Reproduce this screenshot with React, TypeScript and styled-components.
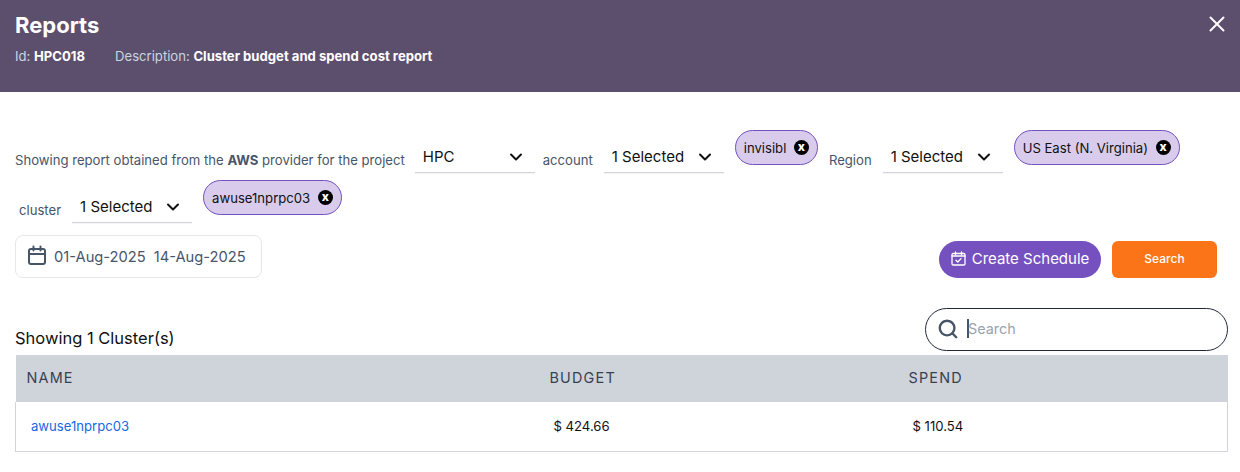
import React from 'react';
import styled, {createGlobalStyle} from 'styled-components';
import {ChevronDown, Search as SearchIcon, X} from 'lucide-react';

const GlobalStyle = createGlobalStyle`
  html, body {
    margin: 0;
    padding: 0;
    background: #fff;
    font-family: Inter, "Liberation Sans", sans-serif;
  }
  * { box-sizing: border-box; }
`

const Page = styled.div`
  width: 1240px;
  height: 472px;
  overflow: hidden;
`

const Header = styled.header`
  height: 92px;
  background-color: #5c4f6e;
  padding: 11px 10px 0 15px;
  display: flex;
  justify-content: space-between;
`

const Title = styled.h1`
  margin: 0;
  color: #fff;
  font-size: 22px;
  line-height: 28px;
  font-weight: 700;
`

const Meta = styled.div`
  display: flex;
  gap: 30px;
  margin-top: 8px;
  font-size: 13.12px;
  line-height: 18px;
  color: #cbd5e1;
  b { color: #fff; font-weight: 700; }
`

const Close = styled.button`
  border: 0;
  padding: 0;
  background: none;
  color: #fff;
  height: 26px;
`

const Body = styled.main`
  padding: 38px 12px 0 15px;
`

const FilterRow = styled.div`
  display: flex;
  align-items: flex-start;
  height: 50px;
`

const Label = styled.span<{$left?: number; $right?: number}>`
  font-size: 13.12px;
  line-height: 18px;
  color: #475569;
  margin-top: 21px;
  margin-left: ${props => props.$left ?? 0}px;
  margin-right: ${props => props.$right ?? 0}px;
  white-space: nowrap;
  b { font-weight: 700; }
`

const Select = styled.div`
  width: 120px;
  height: 43px;
  padding: 18px 9px 0 8px;
  border-bottom: 1px solid #d1d5db;
  display: flex;
  align-items: flex-start;
  justify-content: space-between;
  font-size: 15px;
  line-height: 18px;
  color: #111;
  box-shadow: 0 1px 1px rgba(0, 0, 0, 0.04);
  svg { margin-top: -1px; }
`

const Pill = styled.div<{$left: number}>`
  height: 35px;
  margin-left: ${props => props.$left}px;
  padding: 0 8px;
  display: flex;
  align-items: center;
  gap: 7.6px;
  border: 1px solid #7551c0;
  border-radius: 18px;
  background-color: #d8cbec;
  font-size: 13.12px;
  color: #111;
  white-space: nowrap;
`

const PillClose = styled.span`
  width: 15px;
  height: 15px;
  border-radius: 50%;
  background: #000;
  color: #fff;
  font-size: 12px;
  font-weight: 800;
  line-height: 13px;
  text-align: center;
`

const ActionRow = styled.div`
  display: flex;
  justify-content: space-between;
  align-items: flex-end;
  margin-top: 5px;
  padding-right: 11px;
`

const DateBox = styled.div`
  width: 247px;
  height: 43px;
  border: 1px solid #e5e7eb;
  border-radius: 8px;
  padding: 0 11px;
  display: flex;
  align-items: center;
  gap: 7px;
  font-size: 14.7px;
  color: #475569;
  white-space: nowrap;
  span + span { margin-left: 1px; }
`

const Actions = styled.div`
  display: flex;
  gap: 11px;
`

const ScheduleButton = styled.button`
  width: 162px;
  height: 37px;
  border: 0;
  border-radius: 19px;
  background-color: #7551c0;
  color: #fff;
  font-family: inherit;
  font-size: 15px;
  display: flex;
  align-items: center;
  justify-content: center;
  gap: 6px;
  padding: 0 0 2px;
`

const SearchButton = styled.button`
  width: 105px;
  height: 37px;
  border: 0;
  border-radius: 6px;
  background-color: #fb7418;
  color: #fff;
  font-family: inherit;
  font-size: 12px;
  font-weight: 500;
  padding: 0 0 2px;
`

const TableBar = styled.div`
  display: flex;
  justify-content: space-between;
  align-items: flex-end;
  margin-top: 30px;
  height: 47px;
`

const Count = styled.div`
  font-size: 16.5px;
  line-height: 20px;
  color: #111;
  margin-bottom: 7px;
`

const SearchBox = styled.label`
  width: 303px;
  height: 43px;
  margin-bottom: 4px;
  border: 1px solid #1f2937;
  border-radius: 22px;
  display: flex;
  align-items: center;
  padding: 0 0 2px 11px;
  color: #475569;
`

const Caret = styled.span`
  width: 2px;
  height: 19px;
  margin-left: 8px;
  background: #475569;
  flex: none;
`

const SearchInput = styled.input`
  border: 0;
  outline: none;
  padding: 0;
  margin-left: -1px;
  flex: 1;
  min-width: 0;
  font-family: inherit;
  font-size: 14.4px;
  background: transparent;
  &::placeholder { color: #9ca3af; opacity: 1; }
`

const Table = styled.table`
  width: 1213px;
  border-collapse: collapse;
  table-layout: fixed;
`

const HeadCell = styled.th<{$width?: number}>`
  width: ${props => props.$width ? `${props.$width}px` : 'auto'};
  height: 47px;
  padding: 0 11px 2px;
  background-color: #cfd3da;
  text-align: left;
  font-size: 14.4px;
  font-weight: 400;
  letter-spacing: 1.2px;
  color: #374151;
`

const BodyRow = styled.tr`
  border: 1px solid #d1d5db;
  border-top: 0;
`

const Cell = styled.td`
  height: 49px;
  padding: 0 15px;
  font-size: 13.12px;
  color: #111;
`

const Link = styled.a`
  color: #1668e3;
  text-decoration: none;
`

const DateIcon: React.FC = () => (
  <svg width="20" height="20" viewBox="0 0 20 20" fill="none" stroke="currentColor" strokeWidth="2" strokeLinecap="round" style={{marginTop: -3}}>
    <rect x="2" y="4" width="16" height="15" rx="2" />
    <path d="M2 9h16M6.5 1.5v4M13.5 1.5v4" />
  </svg>
)

const ScheduleIcon: React.FC = () => (
  <svg width="15" height="15" viewBox="0 0 15 15" fill="none" stroke="currentColor" strokeWidth="1.3" strokeLinecap="round" strokeLinejoin="round">
    <rect x="1" y="2.5" width="13" height="11.5" rx="1.2" />
    <path d="M1 5h13M4.5 1v2.5M10.5 1v2.5M5 9.2l1.8 1.8 3.2-3.4" />
  </svg>
)

const App: React.FC = () => {
  const chevron = <ChevronDown size={20} strokeWidth={2.4} />
  return (
    <Page>
      <GlobalStyle />
      <Header>
        <div>
          <Title>Reports</Title>
          <Meta>
            <span>Id: <b>HPC018</b></span>
            <span>Description: <b>Cluster budget and spend cost report</b></span>
          </Meta>
        </div>
        <Close aria-label="Close"><X size={26} strokeWidth={1.8} /></Close>
      </Header>
      <Body>
        <FilterRow>
          <Label $right={10}>Showing report obtained from the <b>AWS</b> provider for the project</Label>
          <Select>HPC{chevron}</Select>
          <Label $left={8} $right={11}>account</Label>
          <Select>1 Selected{chevron}</Select>
          <Pill $left={11}>invisibl<PillClose>x</PillClose></Pill>
          <Label $left={11} $right={11}>Region</Label>
          <Select>1 Selected{chevron}</Select>
          <Pill $left={11}>US East (N. Virginia)<PillClose>x</PillClose></Pill>
        </FilterRow>
        <FilterRow>
          <Label $left={4} $right={11}>cluster</Label>
          <Select>1 Selected{chevron}</Select>
          <Pill $left={11}>awuse1nprpc03<PillClose>x</PillClose></Pill>
        </FilterRow>
        <ActionRow>
          <DateBox>
            <DateIcon />
            <span>01-Aug-2025</span>
            <span>14-Aug-2025</span>
          </DateBox>
          <Actions>
            <ScheduleButton><ScheduleIcon />Create Schedule</ScheduleButton>
            <SearchButton>Search</SearchButton>
          </Actions>
        </ActionRow>
        <TableBar>
          <Count>Showing 1 Cluster(s)</Count>
          <SearchBox>
            <SearchIcon size={22} strokeWidth={2.6} />
            <Caret />
            <SearchInput placeholder="Search" />
          </SearchBox>
        </TableBar>
        <Table>
          <thead>
            <tr>
              <HeadCell $width={523}>NAME</HeadCell>
              <HeadCell $width={359}>BUDGET</HeadCell>
              <HeadCell>SPEND</HeadCell>
            </tr>
          </thead>
          <tbody>
            <BodyRow>
              <Cell><Link href="#">awuse1nprpc03</Link></Cell>
              <Cell>$ 424.66</Cell>
              <Cell>$ 110.54</Cell>
            </BodyRow>
          </tbody>
        </Table>
      </Body>
    </Page>
  );
};

export default App;
